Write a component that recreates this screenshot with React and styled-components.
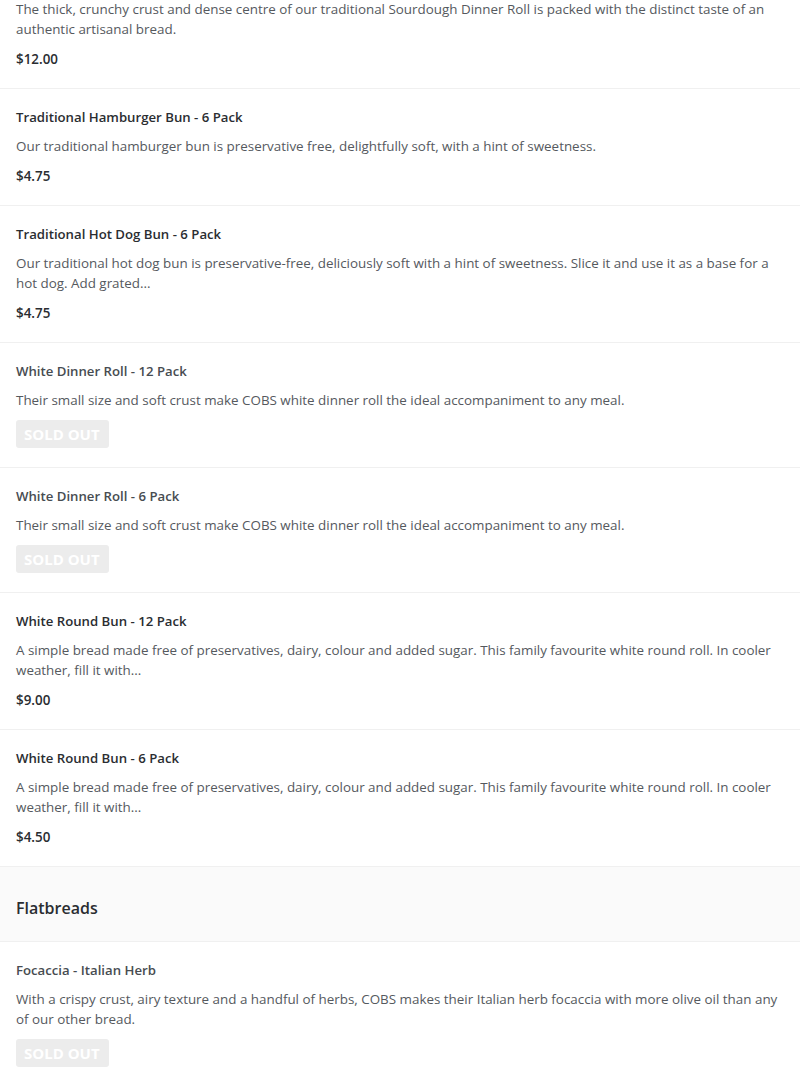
import styled, { createGlobalStyle } from 'styled-components';

const GlobalStyle = createGlobalStyle`
    * {
        box-sizing: border-box;
    }
    body {
        margin: 0;
        background: #ffffff;
        font-family: 'Open Sans', 'Noto Sans', sans-serif;
        -webkit-font-smoothing: antialiased;
    }
`;

const Menu = styled.div`
    width: 800px;
    margin-top: -19px;
`;

const Category = styled.h2`
    margin: 0;
    padding: 29px 16px 21px;
    background: #fafafa;
    border-top: 1px solid #f0f0f0;
    font-size: 16px;
    line-height: 24px;
    font-weight: 600;
    color: #2a2d31;
`;

const Item = styled.div`
    padding: 18px 16px 19px;
    border-top: 1px solid #f0f0f0;
    display: flex;
    flex-direction: column;
    align-items: flex-start;

    &:first-child {
        border-top: none;
    }
`;

const Title = styled.h3`
    margin: 0 0 9px;
    font-size: 13.2px;
    line-height: 20px;
    font-weight: 600;
    color: ${(props) => (props.$soldOut ? '#474c51' : '#2a2d31')};
`;

const Description = styled.p`
    margin: 0;
    font-size: 13.4px;
    line-height: 20px;
    color: #55595e;
`;

const Price = styled.div`
    margin-top: 10px;
    font-size: 13.4px;
    line-height: 20px;
    font-weight: 600;
    color: #2a2d31;
`;

const SoldOut = styled.span`
    margin-top: 10px;
    height: 28px;
    padding: 0 8px 0 8px;
    min-width: 93px;
    display: inline-flex;
    align-items: center;
    background: #ececec;
    border-radius: 3px;
    color: #ffffff;
    font-size: 15px;
    font-weight: 700;
    text-transform: uppercase;
`;

const sections = [
    {
        items: [
            {
                title: '',
                desc: 'The thick, crunchy crust and dense centre of our traditional Sourdough Dinner Roll is packed with the distinct taste of an authentic artisanal bread.',
                price: '$12.00',
            },
            {
                title: 'Traditional Hamburger Bun - 6 Pack',
                desc: 'Our traditional hamburger bun is preservative free, delightfully soft, with a hint of sweetness.',
                price: '$4.75',
            },
            {
                title: 'Traditional Hot Dog Bun - 6 Pack',
                desc: 'Our traditional hot dog bun is preservative-free, deliciously soft with a hint of sweetness. Slice it and use it as a base for a hot dog. Add grated...',
                price: '$4.75',
            },
            {
                title: 'White Dinner Roll - 12 Pack',
                desc: 'Their small size and soft crust make COBS white dinner roll the ideal accompaniment to any meal.',
            },
            {
                title: 'White Dinner Roll - 6 Pack',
                desc: 'Their small size and soft crust make COBS white dinner roll the ideal accompaniment to any meal.',
            },
            {
                title: 'White Round Bun - 12 Pack',
                desc: 'A simple bread made free of preservatives, dairy, colour and added sugar. This family favourite white round roll. In cooler weather, fill it with...',
                price: '$9.00',
            },
            {
                title: 'White Round Bun - 6 Pack',
                desc: 'A simple bread made free of preservatives, dairy, colour and added sugar. This family favourite white round roll. In cooler weather, fill it with...',
                price: '$4.50',
            },
        ],
    },
    {
        name: 'Flatbreads',
        items: [
            {
                title: 'Focaccia - Italian Herb',
                desc: 'With a crispy crust, airy texture and a handful of herbs, COBS makes their Italian herb focaccia with more olive oil than any of our other bread.',
            },
        ],
    },
];

function App() {
    return (
        <>
            <GlobalStyle />
            <Menu>
                {sections.map((section, i) => (
                    <div key={i}>
                        {section.name && <Category>{section.name}</Category>}
                        {section.items.map((item, j) => (
                            <Item key={j}>
                                {item.title && <Title $soldOut={!item.price}>{item.title}</Title>}
                                <Description>{item.desc}</Description>
                                {item.price ? <Price>{item.price}</Price> : <SoldOut>Sold out</SoldOut>}
                            </Item>
                        ))}
                    </div>
                ))}
            </Menu>
        </>
    );
}

export default App;
